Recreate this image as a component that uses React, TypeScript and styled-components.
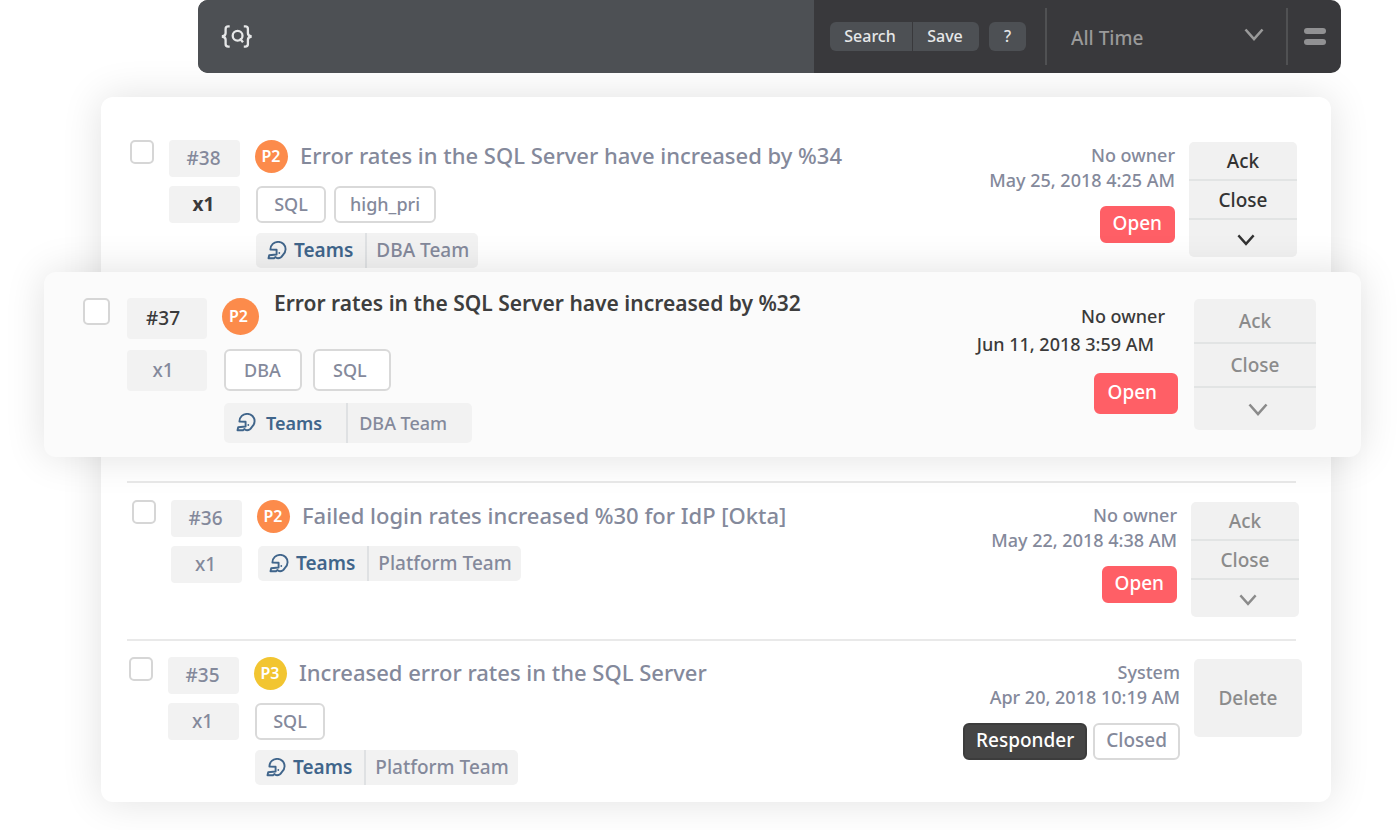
import React from "react";
import styled, { createGlobalStyle, css } from "styled-components";

const GlobalStyle = createGlobalStyle`
  * { box-sizing: border-box; }
  body { margin: 0; background: #fff; font-family: "Noto Sans", "Open Sans", sans-serif; font-weight: 500; }
  button, input, select { font: inherit; color: inherit; margin: 0; border: 0; padding: 0; }
  button, select { cursor: pointer; }
`;

const Page = styled.div`
  padding-bottom: 28px;
`;

/* ---------- Search bar ---------- */

const Bar = styled.header`
  position: relative;
  z-index: 1;
  display: flex;
  height: 73px;
  margin: 0 59px 24px 198px;
  border-radius: 10px;
  overflow: hidden;
  background: #39393c;
`;

const Query = styled.label`
  flex: 1;
  min-width: 0;
  display: flex;
  align-items: center;
  gap: 12px;
  padding: 0 23px;
  background: #4d5054;
  color: #e6e7e8;
`;

const QueryInput = styled.input`
  flex: 1;
  min-width: 0;
  background: transparent;
  outline: none;
  font-size: 18px;
`;

const BarActions = styled.div`
  display: flex;
  align-items: center;
  gap: 10px;
  padding: 0 19px 0 16px;
`;

const ButtonGroup = styled.div`
  display: flex;
  gap: 1px;
  border-radius: 6px;
  overflow: hidden;
`;

const BarButton = styled.button<{ $width: number }>`
  width: ${(p) => p.$width}px;
  height: 29px;
  padding: 0 2px 2px 0;
  background: #4d5054;
  color: #e6e7e8;
  font-size: 16px;
  line-height: 20px;
`;

const HelpButton = styled(BarButton)`
  padding-right: 0;
  border-radius: 6px;
`;

const Divider = styled.span`
  width: 2px;
  margin: 8px 0;
  background: #505153;
`;

const Period = styled.div`
  display: grid;
  align-items: center;
  width: 239px;
  padding: 0 22px 0 24px;
  color: #9a9a9a;

  & > * { grid-area: 1 / 1; }
  & > svg { justify-self: end; pointer-events: none; margin-bottom: 5px; }
`;

const PeriodSelect = styled.select`
  appearance: none;
  width: 100%;
  height: 32px;
  margin-top: 2px;
  background: transparent;
  font-size: 19px;
`;

const MenuButton = styled.button`
  display: grid;
  place-items: center;
  width: 53px;
  background: transparent;
  color: #919193;
`;

/* ---------- Alert list ---------- */

const shadow = css`
  box-shadow: 0 0 40px rgba(0, 0, 0, 0.12);
`;

const Panel = styled.ul`
  ${shadow}
  list-style: none;
  margin: 0 69px 0 101px;
  padding: 0;
  border-radius: 12px;
  background: #fff;
`;

const Row = styled.li<{ $left: number; $right: number; $top: number; $height: number; $line?: boolean }>`
  position: relative;
  display: flex;
  align-items: flex-start;
  min-height: ${(p) => p.$height}px;
  padding: ${(p) => p.$top}px ${(p) => p.$right}px 4px ${(p) => p.$left}px;
  color: #84899b;

  ${(p) =>
    p.$line &&
    css`
      &::before {
        content: "";
        position: absolute;
        top: 0;
        left: 26px;
        right: 35px;
        height: 2px;
        background: #e9e9e9;
      }
    `}
`;

const RaisedRow = styled(Row)`
  ${shadow}
  z-index: 1;
  margin: 0 -30px 24px -57px;
  border-radius: 12px;
  background: #fbfbfb;
`;

const Check = styled.input<{ $big?: boolean }>`
  appearance: none;
  flex: none;
  width: ${(p) => (p.$big ? 27 : 24)}px;
  height: ${(p) => (p.$big ? 27 : 24)}px;
  margin-right: ${(p) => (p.$big ? 17 : 15)}px;
  border: 2px solid #d6d6d6;
  border-radius: 5px;
  background: #fff;

  &:checked { background: #84899b; }
`;

const Ids = styled.div<{ $big?: boolean }>`
  flex: none;
  display: grid;
  gap: ${(p) => (p.$big ? 11 : 9)}px;
  width: ${(p) => (p.$big ? 80 : 71)}px;
  margin-right: 15px;
`;

const Id = styled.span<{ $tone?: "dark" | "bold"; $big?: boolean }>`
  height: ${(p) => (p.$big ? 41 : 37)}px;
  border-radius: 4px;
  background: #f2f2f2;
  padding-right: ${(p) => (p.$big ? 8 : 2)}px;
  font-size: 19px;
  line-height: ${(p) => (p.$big ? 41 : 37)}px;
  text-align: center;
  ${(p) => p.$tone && "color: #3a3a3a;"}
  ${(p) => p.$tone === "bold" && "font-weight: 700;"}
`;

const Main = styled.div`
  flex: 1;
  min-width: 0;
`;

const Heading = styled.div<{ $big?: boolean }>`
  display: flex;
  height: ${(p) => (p.$big ? 51 : 46)}px;
  gap: ${(p) => (p.$big ? 15 : 12)}px;
`;

const Priority = styled.span<{ $level: string; $big?: boolean }>`
  flex: none;
  width: ${(p) => (p.$big ? 37 : 33)}px;
  height: ${(p) => (p.$big ? 37 : 33)}px;
  border-radius: 50%;
  background: ${(p) => (p.$level === "P3" ? "#f2c531" : "#fc8b4b")};
  padding-right: ${(p) => (p.$big ? 4 : 1)}px;
  color: #fff;
  font-size: 16px;
  font-weight: 600;
  line-height: ${(p) => (p.$big ? 37 : 33)}px;
  text-align: center;
`;

const Title = styled.h2<{ $big?: boolean }>`
  margin: ${(p) => (p.$big ? "-10px" : "0")} 0 0;
  font-size: ${(p) => (p.$big ? 21 : 22)}px;
  font-weight: ${(p) => (p.$big ? 600 : 500)};
  line-height: 30px;
  white-space: nowrap;
  ${(p) => p.$big && "color: #3e3e3e;"}
`;

const Tags = styled.div<{ $big?: boolean }>`
  display: flex;
  gap: ${(p) => (p.$big ? 11 : 8)}px;
  margin: 0 0 ${(p) => (p.$big ? 12 : 10)}px ${(p) => (p.$big ? 2 : 1)}px;
`;

const Tag = styled.span<{ $big?: boolean }>`
  min-width: ${(p) => (p.$big ? 78 : 70)}px;
  height: ${(p) => (p.$big ? 42 : 37)}px;
  padding: 0 ${(p) => (p.$big ? 18 : 14)}px;
  border: 2px solid #d9d9d9;
  border-radius: 6px;
  background: #fff;
  font-size: 18px;
  line-height: ${(p) => (p.$big ? 38 : 33)}px;
  text-align: ${(p) => (p.$big ? "left" : "center")};
`;

const Team = styled.div<{ $big?: boolean }>`
  display: flex;
  width: fit-content;
  height: ${(p) => (p.$big ? 40 : 35)}px;
  margin-left: ${(p) => (p.$big ? 2 : 1)}px;
  border-radius: 5px;
  background: #f2f2f2;
  font-size: ${(p) => (p.$big ? 18 : 19)}px;
  line-height: ${(p) => (p.$big ? 40 : 35)}px;
`;

const TeamLabel = styled.span<{ $big?: boolean }>`
  display: flex;
  align-items: center;
  gap: ${(p) => (p.$big ? 10 : 7)}px;
  padding: 0 ${(p) => (p.$big ? 24 : 12)}px 0 ${(p) => (p.$big ? 12 : 11)}px;
  border-right: 2px solid #dfe1e3;
  color: #40658b;
  font-weight: 600;
`;

const TeamName = styled.span<{ $big?: boolean }>`
  padding: 0 ${(p) => (p.$big ? 25 : 9)}px 0 ${(p) => (p.$big ? 11 : 9)}px;
`;

const Meta = styled.div<{ $big?: boolean }>`
  display: flex;
  flex-direction: column;
  align-items: flex-end;
  margin-right: ${(p) => (p.$big ? 16 : 14)}px;
  padding-top: ${(p) => (p.$big ? 4 : 3)}px;
  font-size: 18px;
  line-height: ${(p) => (p.$big ? 28 : 25)}px;
  white-space: nowrap;
  ${(p) => p.$big && "color: #3a3a3a;"}
`;

const Owner = styled.span<{ $big?: boolean }>`
  padding-right: ${(p) => (p.$big ? 13 : 0)}px;
`;

const When = styled.time<{ $big?: boolean }>`
  padding-right: ${(p) => (p.$big ? 24 : 0)}px;
`;

const States = styled.div<{ $big?: boolean }>`
  display: flex;
  gap: 6px;
  margin-top: ${(p) => (p.$big ? 15 : 13)}px;
`;

const stateColors: Record<string, string> = {
  Open: "border-color: #ff5f66; background: #ff5f66; color: #fff;",
  Responder: "border-color: #3c3c3c; background: #454545; color: #fff;",
  Closed: "border-color: #d9d9d9; background: #fff; color: #84899b;",
};

const State = styled.span<{ $kind: string; $big?: boolean }>`
  height: ${(p) => (p.$big ? 41 : 37)}px;
  padding: 0 ${(p) => (p.$big ? 19 : 11)}px 0 ${(p) => (p.$big ? 12 : 11)}px;
  border: 2px solid;
  border-radius: 6px;
  font-size: 19px;
  line-height: ${(p) => (p.$big ? 35 : 31)}px;
  ${(p) => stateColors[p.$kind]}
`;

const Actions = styled.div<{ $big?: boolean; $dark?: boolean }>`
  flex: none;
  display: grid;
  width: ${(p) => (p.$big ? 122 : 108)}px;
  margin-top: ${(p) => (p.$big ? 1 : 2)}px;
  border-radius: 5px;
  overflow: hidden;
  background: #f1f1f1;
  color: ${(p) => (p.$dark ? "#333" : "#8b8b8b")};
`;

const Action = styled.button<{ $height: number }>`
  height: ${(p) => p.$height}px;
  background: transparent;
  font-size: 19px;
  line-height: 24px;

  & + & { border-top: 2px solid #e2e4e4; }
`;

const MoreAction = styled(Action)`
  padding-left: 5px;
`;

/* ---------- Icons ---------- */

const QueryIcon = () => (
  <svg width="32" height="24" viewBox="0 0 32 24" fill="none" stroke="currentColor" strokeWidth="2.3" aria-hidden="true">
    <path d="M8.700 1.400H7.200Q4.600 1.400 4.600 4V8.200Q4.600 10.800 1 11.500Q4.600 12.200 4.600 14.800V19Q4.600 21.600 7.200 21.600H8.700" />
    <path d="M22.800 1.400H24.300Q26.900 1.400 26.900 4V8.200Q26.900 10.800 30.500 11.500Q26.900 12.200 26.900 14.800V19Q26.900 21.600 24.300 21.600H22.800" />
    <circle cx="16.600" cy="10.800" r="4.900" />
    <path d="M18.800 13.500L22 17.200" />
  </svg>
);

const Chevron = ({ width }: { width: number }) => (
  <svg width={width} height={(width * 13) / 20} viewBox="0 0 20 13" fill="none" stroke="currentColor" strokeWidth="2.6" aria-hidden="true">
    <path d="M1.500 1.500L10 11L18.500 1.500" />
  </svg>
);

const MenuIcon = () => (
  <svg width="22" height="17" viewBox="0 0 22 17" fill="currentColor" aria-hidden="true">
    <rect width="22" height="6" rx="3" />
    <rect y="11" width="22" height="6" rx="3" />
  </svg>
);

const TeamIcon = () => (
  <svg width="20" height="20" viewBox="0 1 20 20" fill="none" stroke="currentColor" strokeWidth="1.9" strokeLinejoin="round" aria-hidden="true">
    <path d="M3.400 9.500C3.500 4.700 7 1.900 11.200 1.900C15.500 1.900 18.600 5.100 18.600 9.300C18.600 12.300 17 14 15.700 15.200C14.600 17.200 13 18.200 11 18.200C9.800 18.200 9 17.700 8.500 17L7 18.300H1.500L2.200 15.300L9.600 14.500V9.800Z" />
    <circle cx="12.300" cy="13" r="0.900" fill="currentColor" stroke="none" />
  </svg>
);

/* ---------- Data ---------- */

interface Alert {
  id: string;
  priority: string;
  title: string;
  tags: string[];
  team: string;
  owner: string;
  when: string;
  states: string[];
  box: { $left: number; $right: number; $top: number; $height: number; $line?: boolean };
  raised?: boolean;
  fresh?: boolean;
}

const alerts: Alert[] = [
  { id: "38", priority: "P2", title: "Error rates in the SQL Server have increased by %34", tags: ["SQL", "high_pri"], team: "DBA Team", owner: "No owner", when: "May 25, 2018 4:25 AM", states: ["Open"], fresh: true, box: { $left: 29, $right: 34, $top: 43, $height: 175 } },
  { id: "37", priority: "P2", title: "Error rates in the SQL Server have increased by %32", tags: ["DBA", "SQL"], team: "DBA Team", owner: "No owner", when: "Jun 11, 2018 3:59 AM", states: ["Open"], raised: true, box: { $left: 39, $right: 45, $top: 26, $height: 185 } },
  { id: "36", priority: "P2", title: "Failed login rates increased %30 for IdP [Okta]", tags: [], team: "Platform Team", owner: "No owner", when: "May 22, 2018 4:38 AM", states: ["Open"], box: { $left: 31, $right: 32, $top: 19, $height: 158, $line: true } },
  { id: "35", priority: "P3", title: "Increased error rates in the SQL Server", tags: ["SQL"], team: "Platform Team", owner: "System", when: "Apr 20, 2018 10:19 AM", states: ["Responder", "Closed"], box: { $left: 28, $right: 29, $top: 18, $height: 163, $line: true } },
];

function AlertRow({ alert }: { alert: Alert }) {
  const big = alert.raised;
  const Box = big ? RaisedRow : Row;
  return (
    <Box {...alert.box}>
      <Check type="checkbox" $big={big} aria-label={`Select alert ${alert.id}`} />
      <Ids $big={big}>
        <Id $big={big} $tone={big ? "dark" : undefined}>#{alert.id}</Id>
        <Id $big={big} $tone={alert.fresh ? "bold" : undefined}>x1</Id>
      </Ids>
      <Main>
        <Heading $big={big}>
          <Priority $big={big} $level={alert.priority}>{alert.priority}</Priority>
          <Title $big={big}>{alert.title}</Title>
        </Heading>
        {alert.tags.length > 0 && (
          <Tags $big={big}>
            {alert.tags.map((tag) => (
              <Tag key={tag} $big={big}>{tag}</Tag>
            ))}
          </Tags>
        )}
        <Team $big={big}>
          <TeamLabel $big={big}>
            <TeamIcon />
            Teams
          </TeamLabel>
          <TeamName $big={big}>{alert.team}</TeamName>
        </Team>
      </Main>
      <Meta $big={big}>
        <Owner $big={big}>{alert.owner}</Owner>
        <When $big={big}>{alert.when}</When>
        <States $big={big}>
          {alert.states.map((state) => (
            <State key={state} $kind={state} $big={big}>{state}</State>
          ))}
        </States>
      </Meta>
      <Actions $big={big} $dark={alert.fresh}>
        {alert.states.includes("Closed") ? (
          <Action $height={78}>Delete</Action>
        ) : (
          <>
            <Action $height={big ? 43 : 37}>Ack</Action>
            <Action $height={big ? 44 : 39}>Close</Action>
            <MoreAction $height={big ? 44 : 39} aria-label="More actions">
              <Chevron width={big ? 20 : 18} />
            </MoreAction>
          </>
        )}
      </Actions>
    </Box>
  );
}

export default function App() {
  return (
    <Page>
      <GlobalStyle />
      <Bar>
        <Query>
          <QueryIcon />
          <QueryInput type="text" aria-label="Search query" />
        </Query>
        <BarActions>
          <ButtonGroup>
            <BarButton $width={82}>Search</BarButton>
            <BarButton $width={66}>Save</BarButton>
          </ButtonGroup>
          <HelpButton $width={37}>?</HelpButton>
        </BarActions>
        <Divider />
        <Period>
          <PeriodSelect aria-label="Time range">
            <option>All Time</option>
          </PeriodSelect>
          <Chevron width={20} />
        </Period>
        <Divider />
        <MenuButton aria-label="Menu">
          <MenuIcon />
        </MenuButton>
      </Bar>
      <Panel>
        {alerts.map((alert) => (
          <AlertRow key={alert.id} alert={alert} />
        ))}
      </Panel>
    </Page>
  );
}
